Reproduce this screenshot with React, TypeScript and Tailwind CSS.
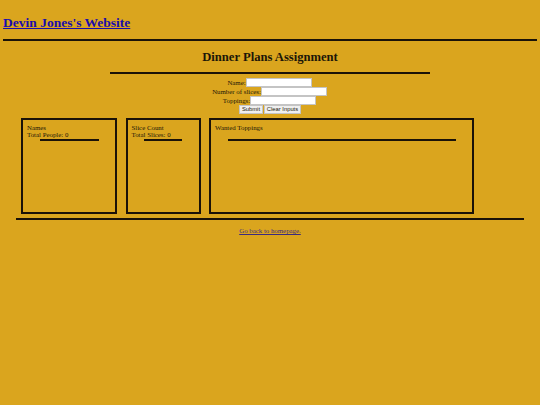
function Panel({
  className,
  lines,
  ruleClass,
  padClass,
}: {
  className: string;
  lines: string[];
  ruleClass: string;
  padClass: string;
}) {
  return (
    <div className={`h-[96px] shrink-0 border-2 border-[#1a1208] text-[6.85px] leading-[7.5px] ${className}`}>
      <div className={`pt-[3.5px] ${padClass}`}>
        {lines.map((line) => (
          <p key={line} className="h-[7.5px] whitespace-nowrap">{line}</p>
        ))}
      </div>
      <div className={`h-[2px] bg-[#1a1208] ${ruleClass}`} />
    </div>
  );
}

function FormRow({ label, inputClass }: { label: string; inputClass: string }) {
  return (
    <div className="flex h-[9px] items-center justify-center pr-[1px]">
      <label className="text-[6.85px] leading-[9px] whitespace-nowrap">{label}</label>
      <input className={`h-[8.5px] border border-[#c4c4c4] bg-white ${inputClass}`} />
    </div>
  );
}

export default function App() {
  return (
    <div className="min-h-[405px] w-[540px] overflow-hidden bg-[#daa51e] font-['Liberation_Serif',serif] text-[#1c1608]">
      <div className="px-[3px] pt-[10px]">
        <a href="#" className="text-[13.5px] leading-[17px] font-bold text-[#1a0dab] underline">
          Devin Jones's Website
        </a>
      </div>
      <div className="mx-[3px] mt-[5px] h-[2px] bg-[#1a1208]" />
      <h2 className="mt-[8px] text-center text-[12.6px] leading-[17px] font-bold">Dinner Plans Assignment</h2>
      <div className="mx-[110px] mt-[6px] h-[2px] bg-[#1a1208]" />
      <form className="mt-[4px]">
        <FormRow label="Name:" inputClass="w-[66px]" />
        <FormRow label="Number of slices:" inputClass="w-[66px]" />
        <FormRow label="Toppings:" inputClass="w-[66px]" />
        <div className="flex h-[9px] items-center justify-center gap-[1px] font-['Liberation_Sans',sans-serif] text-[5.8px]">
          <button type="button" className="h-[8.5px] w-[24px] border border-[#c4c4c4] bg-[#efefef] leading-none">Submit</button>
          <button type="button" className="h-[8.5px] w-[37px] border border-[#c4c4c4] bg-[#efefef] leading-none">Clear Inputs</button>
        </div>
      </form>
      <div className="mt-[4px] ml-[21px] flex gap-[8.5px]">
        <Panel className="w-[96px]" lines={["Names", "Total People: 0"]} padClass="pl-[4px]" ruleClass="ml-[17px] w-[59px]" />
        <Panel className="w-[75px]" lines={["Slice Count", "Total Slices: 0"]} padClass="pl-[4px]" ruleClass="ml-[16px] w-[38px]" />
        <Panel className="w-[265px]" lines={["Wanted Toppings", "\u00a0"]} padClass="pl-[4px]" ruleClass="ml-[17px] w-[228px]" />
      </div>
      <div className="mx-[16px] mt-[4px] h-[2px] bg-[#1a1208]" />
      <p className="mt-[6px] text-center text-[6.85px] leading-[9px]">
        <a href="#" className="text-[#3a2a80] underline">Go back to homepage.</a>
      </p>
    </div>
  );
}
